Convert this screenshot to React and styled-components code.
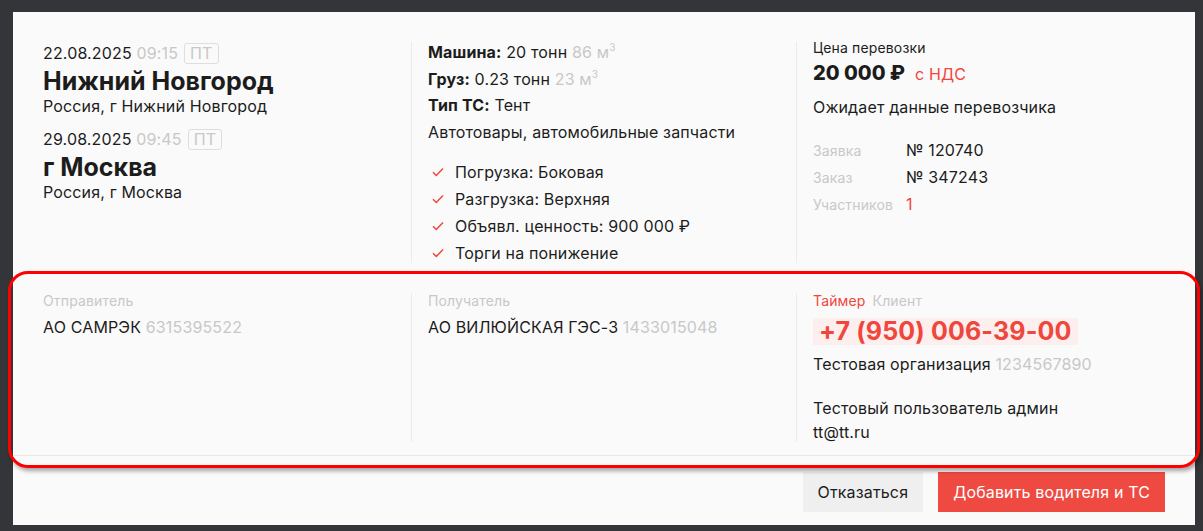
import React from "react";
import styled, { createGlobalStyle } from "styled-components";

const Global = createGlobalStyle`
  html, body { margin: 0; padding: 0; height: 531px; overflow: hidden; }
  body {
    background: #333539;
    font-family: Inter, "Noto Sans", "Liberation Sans", sans-serif;
    color: #1c1c1c;
    letter-spacing: 0.15px;
  }
  * { box-sizing: border-box; }
`;

const red = "#f0463c";
const gray = "#c8c8c8";

const Stage = styled.div`
  position: relative;
  width: 1203px;
  height: 531px;
  padding: 12px 8px 6px 13px;
`;

const Panel = styled.div`
  width: 1182px;
  height: 513px;
  background: #fafafa;
  padding: 30px 30px 15px 30px;
  display: flex;
  flex-direction: column;
`;

const Grid = styled.div`
  display: grid;
  grid-template-columns: 368px 385px 1fr;
  align-items: stretch;
`;

const Col = styled.div`
  display: flex;
  flex-direction: column;
  padding-left: ${(p) => (p.$first ? "0" : "16px")};
  border-left: ${(p) => (p.$first ? "none" : "1px solid #ebebeb")};
`;

const Line = styled.div`
  font-size: 16px;
  line-height: 20px;
  margin-top: ${(p) => p.$mt || 0}px;
  white-space: nowrap;
`;

const Muted = styled.span`
  color: ${gray};
`;

const Badge = styled.span`
  display: inline-block;
  margin-left: 6px;
  padding: 0 5px;
  height: 21px;
  line-height: 18px;
  border: 1.5px solid #dedede;
  border-radius: 3px;
  color: ${gray};
  font-size: 16px;
  vertical-align: top;
`;

const City = styled.div`
  font-size: 25px;
  font-weight: 700;
  letter-spacing: 0;
  line-height: 30px;
  margin-top: 2px;
`;

const Bold = styled.b`
  font-weight: 700;
`;

const Sup = styled.sup`
  font-size: 10px;
  vertical-align: 7px;
  line-height: 0;
`;

const Checks = styled.div`
  display: flex;
  flex-direction: column;
  gap: 7px;
  margin-top: 20px;
`;

const CheckRow = styled.div`
  display: flex;
  align-items: center;
  font-size: 16px;
  line-height: 20px;
  padding-left: 4px;
  white-space: nowrap;
  svg { flex: none; margin-right: 11px; }
`;

const Label = styled.div`
  font-size: 14px;
  line-height: 16px;
  color: ${(p) => p.$color || gray};
  margin-top: ${(p) => p.$mt || 0}px;
`;

const Price = styled.div`
  font-size: 20px;
  line-height: 26px;
  font-weight: 800;
  letter-spacing: 0;
  margin-top: 4px;
  display: flex;
  align-items: baseline;
`;

const Nds = styled.span`
  font-size: 16px;
  font-weight: 400;
  letter-spacing: 0.15px;
  color: ${red};
  margin-left: 10px;
`;

const InfoTable = styled.div`
  display: grid;
  grid-template-columns: 93px 1fr;
  row-gap: 6px;
  margin-top: 23px;
  align-items: baseline;
`;

const InfoLabel = styled.div`
  font-size: 14px;
  line-height: 20px;
  color: ${gray};
`;

const InfoValue = styled.div`
  font-size: 16px;
  line-height: 20px;
  color: ${(p) => p.$color || "#1c1c1c"};
`;

const Bottom = styled.div`
  margin: 30px -30px 0;
  padding: 0 30px 13px;
  border-bottom: 1px solid #e8e8e8;
`;

const Tabs = styled.div`
  display: flex;
  gap: 7px;
`;

const Phone = styled.div`
  align-self: flex-start;
  margin-top: 9px;
  padding: 0 6px;
  height: 27px;
  line-height: 27px;
  font-size: 25px;
  font-weight: 700;
  color: ${red};
  background: #fcefee;
  white-space: nowrap;
`;

const Actions = styled.div`
  display: flex;
  justify-content: flex-end;
  gap: 15px;
  margin-top: 16px;
`;

const Button = styled.button`
  height: 40px;
  padding: 0 15px;
  border: none;
  border-radius: 0;
  font-family: inherit;
  letter-spacing: inherit;
  font-size: 16px;
  background: ${(p) => (p.$primary ? "#ef4a41" : "#efefef")};
  color: ${(p) => (p.$primary ? "#ffffff" : "#1c1c1c")};
  cursor: pointer;
`;

const Annotation = styled.div`
  position: absolute;
  left: 8px;
  top: 271px;
  width: 1192px;
  height: 197px;
  border: 3px solid #ff0000;
  border-radius: 20px;
  box-shadow: 2px 3px 4px rgba(0, 0, 0, 0.35);
  pointer-events: none;
`;

const Check = () => (
  <svg width="12" height="10" viewBox="0 0 12 10">
    <path d="M1 5.2 L4.3 8.5 L11 1.5" fill="none" stroke={red} strokeWidth="1.5" />
  </svg>
);

export default function App() {
  return (
    <Stage>
      <Global />
      <Panel>
        <Grid>
          <Col $first>
            <Line $mt={1}>
              22.08.2025 <Muted>09:15</Muted>
              <Badge>ПТ</Badge>
            </Line>
            <City>Нижний Новгород</City>
            <Line>Россия, г Нижний Новгород</Line>
            <Line $mt={13}>
              29.08.2025 <Muted>09:45</Muted>
              <Badge>ПТ</Badge>
            </Line>
            <City>г Москва</City>
            <Line>Россия, г Москва</Line>
          </Col>
          <Col>
            <Line>
              <Bold>Машина:</Bold> 20 тонн <Muted>86 м<Sup>3</Sup></Muted>
            </Line>
            <Line $mt={6.5}>
              <Bold>Груз:</Bold> 0.23 тонн <Muted>23 м<Sup>3</Sup></Muted>
            </Line>
            <Line $mt={6.5}>
              <Bold>Тип ТС:</Bold> Тент
            </Line>
            <Line $mt={6.5}>Автотовары, автомобильные запчасти</Line>
            <Checks>
              <CheckRow><Check />Погрузка: Боковая</CheckRow>
              <CheckRow><Check />Разгрузка: Верхняя</CheckRow>
              <CheckRow><Check />Объявл. ценность: 900 000 ₽</CheckRow>
              <CheckRow><Check />Торги на понижение</CheckRow>
            </Checks>
          </Col>
          <Col>
            <Label $color="#1c1c1c" $mt={-2}>Цена перевозки</Label>
            <Price>
              20 000 ₽<Nds>с НДС</Nds>
            </Price>
            <Line $mt={10}>Ожидает данные перевозчика</Line>
            <InfoTable>
              <InfoLabel>Заявка</InfoLabel>
              <InfoValue>№ 120740</InfoValue>
              <InfoLabel>Заказ</InfoLabel>
              <InfoValue>№ 347243</InfoValue>
              <InfoLabel>Участников</InfoLabel>
              <InfoValue $color={red}>1</InfoValue>
            </InfoTable>
          </Col>
        </Grid>
        <Bottom>
          <Grid>
            <Col $first>
              <Label>Отправитель</Label>
              <Line $mt={8}>
                АО САМРЭК <Muted>6315395522</Muted>
              </Line>
            </Col>
            <Col>
              <Label>Получатель</Label>
              <Line $mt={8}>
                АО ВИЛЮЙСКАЯ ГЭС-3 <Muted>1433015048</Muted>
              </Line>
            </Col>
            <Col>
              <Tabs>
                <Label $color={red}>Таймер</Label>
                <Label>Клиент</Label>
              </Tabs>
              <Phone>+7 (950) 006-39-00</Phone>
              <Line $mt={9}>
                Тестовая организация <Muted>1234567890</Muted>
              </Line>
              <Line $mt={24}>Тестовый пользователь админ</Line>
              <Line $mt={4}>tt@tt.ru</Line>
            </Col>
          </Grid>
        </Bottom>
        <Actions>
          <Button>Отказаться</Button>
          <Button $primary>Добавить водителя и ТС</Button>
        </Actions>
      </Panel>
      <Annotation />
    </Stage>
  );
}
